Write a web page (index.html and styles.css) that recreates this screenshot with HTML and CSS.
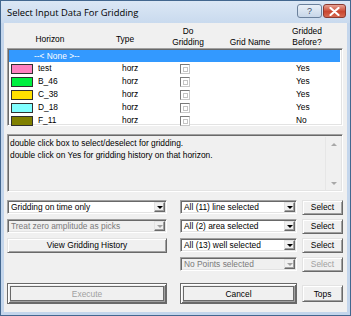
FILE: index.html
```html
<!DOCTYPE html>
<html lang="en">
<head>
  <meta charset="utf-8">
  <title>Select Input Data For Gridding</title>
  <link rel="stylesheet" href="styles.css">
</head>
<body>

<div class="window">
  <div class="titlebar">
    <span class="title">Select Input Data For Gridding</span>
    <div class="caption-buttons">
      <span class="cap-btn help">?</span>
      <span class="cap-btn close">
        <svg width="11" height="9" viewBox="0 0 11 9"><path d="M1.5 1 L9.5 8 M9.5 1 L1.5 8" stroke="#fff" stroke-width="2.2" stroke-linecap="round"/></svg>
      </span>
    </div>
  </div>

  <div class="client">
    <div class="list-head">
      <span class="h-mid">Horizon</span>
      <span class="h-mid">Type</span>
      <span>Do<br>Gridding</span>
      <span>Grid Name</span>
      <span>Gridded<br>Before?</span>
    </div>

    <div class="listbox">
      <div class="row selected"><span class="none">--&lt; None &gt;--</span></div>
      <div class="row">
        <span class="swatch c-pink"></span><span class="name">test</span>
        <span class="type">horz</span><span class="check"></span><span class="before">Yes</span>
      </div>
      <div class="row">
        <span class="swatch c-green"></span><span class="name">B_46</span>
        <span class="type">horz</span><span class="check"></span><span class="before">Yes</span>
      </div>
      <div class="row">
        <span class="swatch c-yellow"></span><span class="name">C_38</span>
        <span class="type">horz</span><span class="check"></span><span class="before">Yes</span>
      </div>
      <div class="row">
        <span class="swatch c-cyan"></span><span class="name">D_18</span>
        <span class="type">horz</span><span class="check"></span><span class="before">Yes</span>
      </div>
      <div class="row">
        <span class="swatch c-olive"></span><span class="name">F_11</span>
        <span class="type">horz</span><span class="check"></span><span class="before">No</span>
      </div>
    </div>

    <div class="notes">
      <div class="notes-text">
        double click box to select/deselect for gridding.<br>
        double click on Yes for gridding history on that horizon.
      </div>
      <div class="vscroll">
        <span class="arr up"></span>
        <span class="arr down"></span>
      </div>
    </div>

    <div class="controls">
      <div class="combo wide"><span class="val">Gridding on time only</span><span class="drop"><i></i></span></div>
      <div class="combo mid"><span class="val">All (11) line selected</span><span class="drop"><i></i></span></div>
      <div class="btn small">Select</div>

      <div class="combo wide disabled"><span class="val">Treat zero amplitude as picks</span><span class="drop"><i></i></span></div>
      <div class="combo mid"><span class="val">All (2) area selected</span><span class="drop"><i></i></span></div>
      <div class="btn small">Select</div>

      <div class="btn wide">View Gridding History</div>
      <div class="combo mid"><span class="val">All (13) well selected</span><span class="drop"><i></i></span></div>
      <div class="btn small">Select</div>

      <div></div>
      <div class="combo mid disabled"><span class="val">No Points selected</span><span class="drop"><i></i></span></div>
      <div class="btn small disabled">Select</div>
    </div>

    <div class="actions">
      <div class="btn wide default disabled">Execute</div>
      <div class="btn mid default">Cancel</div>
      <div class="btn small tops">Tops</div>
    </div>
  </div>
</div>

</body>
</html>
```

FILE: styles.css
```css
html, body {
  margin: 0;
  padding: 0;
  background: #ffffff;
}

.window {
  width: 351px;
  height: 316px;
  box-sizing: border-box;
  border: 1px solid #43678f;
  background: #c4d6ec;
  padding: 0 3px 3px 3px;
  display: flex;
  flex-direction: column;
  font-family: "Liberation Sans", Arial, sans-serif;
  font-size: 8.4px;
  color: #000;
}

/* caption */
.titlebar {
  height: 22px;
  display: flex;
  align-items: center;
  justify-content: space-between;
  background: linear-gradient(#dbe7f5, #c9daee);
  margin: 0 -3px;
  padding: 0 4px 0 6px;
}
.title {
  font-family: "Open Sans", "Liberation Sans", sans-serif;
  font-size: 9.4px;
  color: #000;
}
.caption-buttons {
  display: flex;
  gap: 1px;
  margin-top: -2px;
}
.cap-btn {
  height: 14px;
  box-sizing: border-box;
  border: 1px solid #6b819c;
  border-radius: 3px;
  display: flex;
  align-items: center;
  justify-content: center;
}
.help {
  width: 25px;
  background: linear-gradient(#e9f0f8, #c7d6e8);
  font-size: 9px;
  color: #3d4f66;
}
.close {
  width: 23px;
  border-color: #8a3a30;
  background: linear-gradient(#e9a496, #c9462f 55%, #d76a52);
}

/* client area */
.client {
  flex: 1;
  background: #f0f0f0;
  padding: 3px 4px 0 3px;
  display: flex;
  flex-direction: column;
}

.list-head {
  display: grid;
  grid-template-columns: 86px 64px 62px 62px 52px;
  height: 22px;
  line-height: 11px;
  text-align: center;
  align-items: end;
}
.list-head .h-mid {
  padding-bottom: 3px;
}

.listbox {
  height: 78px;
  box-sizing: border-box;
  border: 1px solid #a0a0a0;
  border-right-color: #fff;
  border-bottom-color: #fff;
  box-shadow: inset 1px 1px 0 #696969, inset -1px -1px 0 #e3e3e3;
  background: #fff;
  padding: 1px 2px 0 1px;
}
.row {
  height: 13px;
  display: flex;
  align-items: center;
  line-height: 13px;
}
.row.selected {
  background: #3399ff;
  color: #fff;
  height: 12px;
}
.none {
  padding-left: 25px;
}
.swatch {
  width: 20px;
  height: 8px;
  border: 1px solid #303030;
  margin-left: 2px;
}
.c-pink { background: #ff80c0; }
.c-green { background: #00f040; }
.c-yellow { background: #ffe000; }
.c-cyan { background: #80ffff; }
.c-olive { background: #808000; }
.name {
  width: 84px;
  padding-left: 5px;
}
.type {
  width: 58px;
}
.check {
  width: 10px;
  height: 10px;
  box-sizing: border-box;
  border: 1px solid #7a7a7a;
  border-right-color: #c8c8c8;
  border-bottom-color: #c8c8c8;
  background: #fff;
  position: relative;
  margin-right: 106px;
}
.check::after {
  content: "";
  position: absolute;
  left: 2px;
  top: 2px;
  width: 3px;
  height: 3px;
  border: 1px solid #c4c4c4;
}

/* notes */
.notes {
  margin-top: 8px;
  height: 58px;
  box-sizing: border-box;
  border: 1px solid #a0a0a0;
  border-right-color: #fff;
  border-bottom-color: #fff;
  box-shadow: inset 1px 1px 0 #696969, inset -1px -1px 0 #e3e3e3;
  display: flex;
}
.notes-text {
  flex: 1;
  padding: 2px 0 0 2px;
  line-height: 12px;
}
.vscroll {
  width: 15px;
  margin: 2px 1px 1px 0;
  border-left: 1px solid #e6e6e6;
  display: flex;
  flex-direction: column;
  justify-content: space-between;
  align-items: center;
  padding: 6px 0 5px;
}
.arr {
  width: 0;
  height: 0;
  border-left: 3px solid transparent;
  border-right: 3px solid transparent;
}
.arr.up { border-bottom: 3px solid #a8a8a8; }
.arr.down { border-top: 3px solid #a8a8a8; }

/* controls */
.controls {
  margin-top: 8px;
  display: grid;
  grid-template-columns: 173px 122px 41px;
  grid-auto-rows: 14px;
  row-gap: 5px;
  align-items: center;
}

.combo {
  height: 14px;
  box-sizing: border-box;
  border: 1px solid #a0a0a0;
  border-right-color: #fff;
  border-bottom-color: #fff;
  box-shadow: inset 1px 1px 0 #696969, inset -1px -1px 0 #e3e3e3;
  background: #fff;
  display: flex;
  align-items: center;
  padding: 1px;
}
.combo .val {
  flex: 1;
  padding-left: 2px;
  white-space: nowrap;
}
.combo .drop {
  width: 11px;
  height: 10px;
  box-sizing: border-box;
  background: #f0f0f0;
  border: 1px solid #e3e3e3;
  border-right-color: #696969;
  border-bottom-color: #696969;
  box-shadow: inset -1px -1px 0 #a0a0a0;
  display: flex;
  align-items: center;
  justify-content: center;
}
.combo .drop i {
  width: 0;
  height: 0;
  border-left: 3px solid transparent;
  border-right: 3px solid transparent;
  border-top: 3px solid #000;
}
.combo.disabled {
  background: #f0f0f0;
  color: #7a7a7a;
}
.combo.disabled .drop i {
  border-top-color: #a0a0a0;
}
.wide { width: 160px; }
.mid { width: 117px; }
.small { width: 41px; }

.btn {
  height: 15px;
  box-sizing: border-box;
  background: #f0f0f0;
  border: 1px solid #e3e3e3;
  border-right-color: #696969;
  border-bottom-color: #696969;
  box-shadow: inset 1px 1px 0 #fff, inset -1px -1px 0 #a0a0a0;
  display: flex;
  align-items: center;
  justify-content: center;
}
.btn.disabled {
  color: #a0a0a0;
}
.btn.default {
  height: 21px;
  border: 1px solid #696969;
  box-shadow: inset 1px 1px 0 #fff, inset -1px -1px 0 #696969,
              inset 2px 2px 0 #f0f0f0, inset -2px -2px 0 #a0a0a0,
              inset 3px 3px 0 #696969, inset -3px -3px 0 #696969;
}

.actions {
  margin-top: 12px;
  display: grid;
  grid-template-columns: 173px 122px 41px;
  align-items: center;
}
.tops {
  height: 17px;
}
```
